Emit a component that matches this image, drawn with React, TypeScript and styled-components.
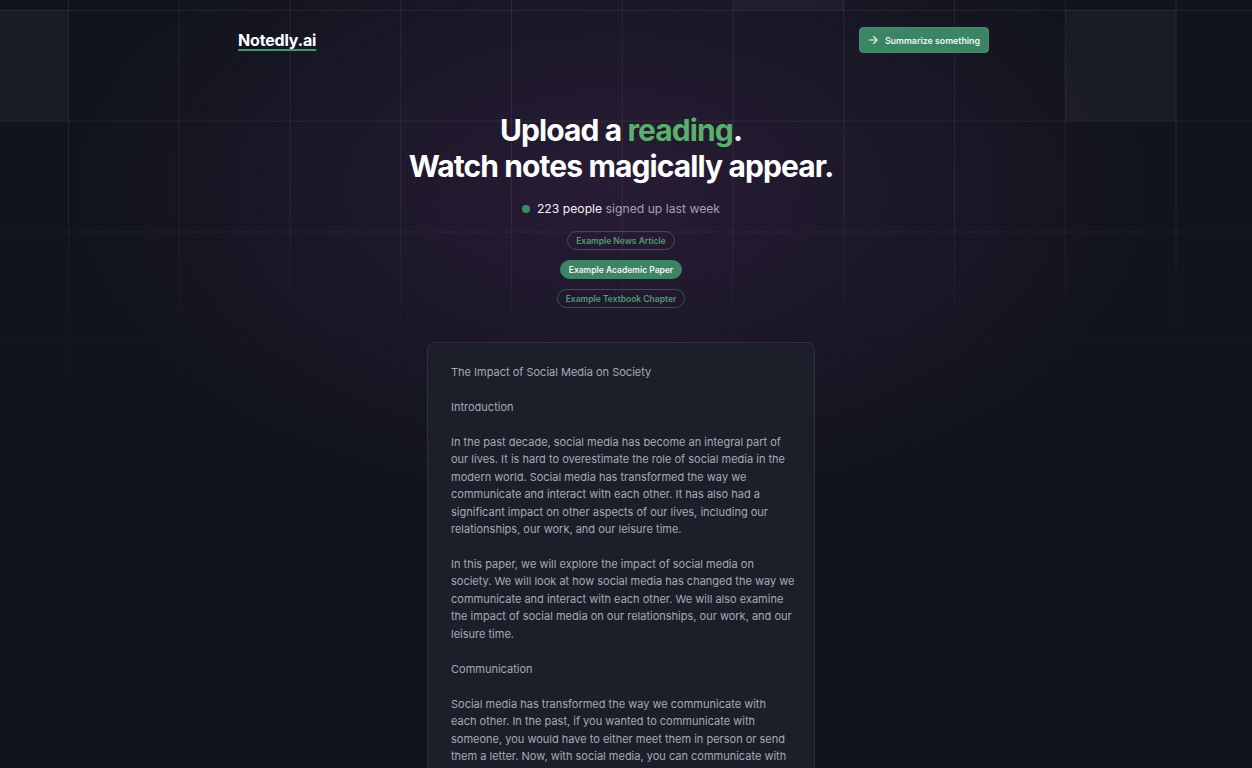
import React from "react";
import styled, { createGlobalStyle } from "styled-components";

const GlobalStyle = createGlobalStyle`
  html, body { margin: 0; padding: 0; background: #11141d; }
  body { font-family: Inter, "Noto Sans", sans-serif; color: #fff; overflow: hidden; }
  * { box-sizing: border-box; }
`;

const Page = styled.div`
  position: relative;
  min-height: 768px;
  background: radial-gradient(ellipse 540px 310px at 615px 190px, rgba(46, 30, 60, 0.8), rgba(17, 20, 29, 0) 100%), #11141d;
  overflow: hidden;
`;

const GridLayer = styled.div`
  position: absolute;
  inset: 0;
  pointer-events: none;
  background-image:
    linear-gradient(to right, rgba(255, 255, 255, 0.07) 1px, transparent 1px),
    linear-gradient(to bottom, rgba(255, 255, 255, 0.07) 1px, transparent 1px);
  background-size: 110.75px 110.75px;
  background-position: 68px 10px;
  -webkit-mask-image: linear-gradient(to bottom, #000 0px, #000 200px, rgba(0,0,0,0.3) 320px, transparent 420px);
  mask-image: linear-gradient(to bottom, #000 0px, #000 200px, rgba(0,0,0,0.3) 320px, transparent 420px);
`;

const Cell = styled.div<{ $x: number; $y: number }>`
  position: absolute;
  left: ${(p) => p.$x}px;
  top: ${(p) => p.$y}px;
  width: 111px;
  height: 111px;
  background: rgba(255, 255, 255, 0.035);
`;

const Content = styled.div`
  position: relative;
  width: 1242px;
  display: flex;
  flex-direction: column;
  align-items: center;
`;

const Header = styled.header`
  width: 768px;
  height: 80px;
  display: flex;
  align-items: flex-start;
  justify-content: space-between;
  padding: 27px 16px 0 1px;
`;

const Logo = styled.a`
  font-size: 16px;
  font-weight: 700;
  color: #fff;
  letter-spacing: -0.01em;
  text-decoration: underline;
  text-decoration-color: #3d9a6c;
  text-decoration-thickness: 2px;
  text-underline-offset: 3px;
  margin-top: 3px;
`;

const CtaButton = styled.button`
  display: flex;
  align-items: center;
  gap: 6px;
  height: 26px;
  padding: 0 8px 0 7px;
  background: #3b8464;
  border: 1px solid #478f6e;
  border-radius: 4px;
  color: #f2f5f3;
  font-family: Inter, sans-serif;
  font-size: 8.8px;
  font-weight: 600;
  cursor: pointer;
`;

const Hero = styled.section`
  display: flex;
  flex-direction: column;
  align-items: center;
  margin-top: 32px;
`;

const Title = styled.h1`
  margin: 0;
  font-size: 30px;
  line-height: 36px;
  font-weight: 700;
  letter-spacing: -0.03em;
  text-align: center;
  color: #fff;
`;

const Accent = styled.span`
  color: #5bb06b;
`;

const Signup = styled.p`
  margin: 17px 0 0;
  display: flex;
  align-items: center;
  gap: 6px;
  font-size: 12.2px;
  color: #a3a3ad;
`;

const Dot = styled.span`
  width: 8px;
  height: 8px;
  border-radius: 50%;
  background: #3f8a66;
  margin-right: 1px;
`;

const Strong = styled.span`
  color: #f2f2f4;
`;

const Pills = styled.div`
  margin-top: 15px;
  display: flex;
  flex-direction: column;
  align-items: center;
  gap: 10px;
`;

const Pill = styled.button<{ $active?: boolean }>`
  height: 19px;
  padding: 0 8px;
  border-radius: 999px;
  font-family: Inter, sans-serif;
  font-size: 8.5px;
  font-weight: 600;
  cursor: pointer;
  background: ${(p) => (p.$active ? "#3b8464" : "transparent")};
  border: 1px solid ${(p) => (p.$active ? "#3b8464" : "#2e5a47")};
  color: ${(p) => (p.$active ? "#f1f5f2" : "#4a9e70")};
`;

const Card = styled.div`
  margin-top: 34px;
  width: 388px;
  background: #1c1e29;
  border: 1px solid #2d303b;
  border-radius: 8px;
  padding: 21px 22px 24px 23px;
  font-size: 11px;
  line-height: 17.45px;
  color: #a8aab4;
  white-space: pre;
`;

const text = `The Impact of Social Media on Society

Introduction

In the past decade, social media has become an integral part of
our lives. It is hard to overestimate the role of social media in the
modern world. Social media has transformed the way we
communicate and interact with each other. It has also had a
significant impact on other aspects of our lives, including our
relationships, our work, and our leisure time.

In this paper, we will explore the impact of social media on
society. We will look at how social media has changed the way we
communicate and interact with each other. We will also examine
the impact of social media on our relationships, our work, and our
leisure time.

Communication

Social media has transformed the way we communicate with
each other. In the past, if you wanted to communicate with
someone, you would have to either meet them in person or send
them a letter. Now, with social media, you can communicate with
anyone in the world instantly.`;

const ArrowIcon = () => (
  <svg width="12" height="12" viewBox="0 0 24 24" fill="none" stroke="currentColor" strokeWidth="2.2" strokeLinecap="round" strokeLinejoin="round">
    <path d="M4 12h16" />
    <path d="M13 5l7 7-7 7" />
  </svg>
);

export default function App() {
  return (
    <>
      <GlobalStyle />
      <Page>
        <GridLayer>
          <Cell $x={-43} $y={10} />
          <Cell $x={733} $y={-101} />
          <Cell $x={1065} $y={10} />
        </GridLayer>
        <Content>
          <Header>
            <Logo>Notedly.ai</Logo>
            <CtaButton>
              <ArrowIcon />
              Summarize something
            </CtaButton>
          </Header>
          <Hero>
            <Title>
              Upload a <Accent>reading</Accent>.
              <br />
              Watch notes magically appear.
            </Title>
            <Signup>
              <Dot />
              <span>
                <Strong>223 people</Strong> signed up last week
              </span>
            </Signup>
            <Pills>
              <Pill>Example News Article</Pill>
              <Pill $active>Example Academic Paper</Pill>
              <Pill>Example Textbook Chapter</Pill>
            </Pills>
          </Hero>
          <Card>{text}</Card>
        </Content>
      </Page>
    </>
  );
}
